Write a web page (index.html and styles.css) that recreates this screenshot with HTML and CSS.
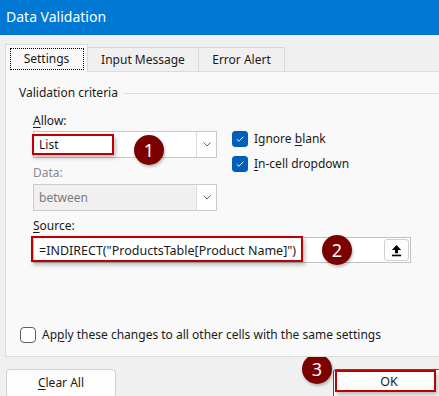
FILE: index.html
```html
<!DOCTYPE html>
<html lang="en">
<head>
  <meta charset="UTF-8" />
  <title>Data Validation</title>
  <link rel="stylesheet" href="styles.css">
</head>
<body>
  <div class="dialog">
    <div class="titlebar">Data Validation</div>

    <div class="tabs">
      <div class="tab active"><span class="focus">Settings</span></div>
      <div class="tab">Input Message</div>
      <div class="tab">Error Alert</div>
    </div>

    <div class="panel">
      <div class="group-head">
        <span>Validation criteria</span>
        <span class="rule"></span>
      </div>

      <div class="criteria">
        <div class="top-row">
          <div class="col">
            <div class="label"><u>A</u>llow:</div>
            <div class="select">
              <span class="value">List</span>
              <span class="drop">
                <svg viewBox="0 0 8 5"><path d="M0.5 0.5 L4 4 L7.5 0.5" /></svg>
              </span>
              <span class="mark mark-list"></span>
              <span class="badge badge-1">1</span>
            </div>

            <div class="label label-data disabled">Data:</div>
            <div class="select disabled">
              <span class="value">between</span>
              <span class="drop">
                <svg viewBox="0 0 8 5"><path d="M0.5 0.5 L4 4 L7.5 0.5" /></svg>
              </span>
            </div>
          </div>

          <div class="checks">
            <div class="check">
              <span class="box on">
                <svg viewBox="0 0 16 16"><path d="M4.2 8.2 L6.8 10.6 L11.8 5.4" /></svg>
              </span>
              <span>Ignore <u>b</u>lank</span>
            </div>
            <div class="check">
              <span class="box on">
                <svg viewBox="0 0 16 16"><path d="M4.2 8.2 L6.8 10.6 L11.8 5.4" /></svg>
              </span>
              <span><u>I</u>n-cell dropdown</span>
            </div>
          </div>
        </div>

        <div class="label label-source"><u>S</u>ource:</div>
        <div class="source">
          <span class="value">=INDIRECT("ProductsTable[Product Name]")</span>
          <span class="upload">
            <svg viewBox="0 0 12 14"><path d="M6 1 L11 6.5 L7.6 6.5 L7.6 10 L4.4 10 L4.4 6.5 L1 6.5 Z" /><rect x="1" y="11.5" width="10" height="1.8" /></svg>
          </span>
          <span class="mark mark-source"></span>
          <span class="badge badge-2">2</span>
        </div>
      </div>

      <div class="apply">
        <span class="box"></span>
        <span>Ap<u>p</u>ly these changes to all other cells with the same settings</span>
      </div>
    </div>

    <div class="buttons">
      <div class="btn"><u>C</u>lear All</div>
      <div class="btn btn-ok">
        OK
        <span class="mark mark-ok"></span>
        <span class="badge badge-3">3</span>
      </div>
    </div>
  </div>
</body>
</html>
```

FILE: styles.css
```css
html, body {
  margin: 0; padding: 0; height: 100%; overflow: hidden; background-color: #f0f0f0;
  font-family: 'Noto Sans', 'Open Sans', sans-serif;
  font-size: 12px;
  color: #1a1a1a;
}
u {
  text-decoration-thickness: 1px;
  text-underline-offset: 2px;
}
.dialog {
  width: 439px;
  height: 396px;
  overflow: hidden;
  background: #f0f0f0;
}
.titlebar {
  height: 35px;
  background-color: #0078d4;
  color: white;
  font-size: 14px;
  line-height: 34px;
  padding-left: 6px;
  box-sizing: border-box;
}
.tabs {
  display: flex;
  align-items: flex-end;
  margin-top: 9px;
  padding-left: 5px;
  height: 27px;
}
.tab {
  height: 24px;
  box-sizing: border-box;
  border: 1px solid #d9d9d9;
  border-bottom: none;
  border-left: none;
  background: #f0f0f0;
  display: flex;
  align-items: center;
  justify-content: center;
  line-height: 16px;
}
.tab:nth-child(2) { width: 111px; }
.tab:nth-child(3) { width: 86px; }
.tab.active {
  width: 83px;
  height: 28px;
  margin-bottom: -1px;
  border-left: 1px solid #d9d9d9;
  background: #f9f9f9;
  position: relative;
  z-index: 2;
}
.focus {
  display: flex;
  align-items: center;
  justify-content: center;
  width: 74px;
  height: 22px;
  box-sizing: border-box;
  border: 1px dotted #000;
  margin-top: 1px;
}
.panel {
  margin-left: 5px;
  width: 450px;
  height: 286px;
  box-sizing: border-box;
  background: #f9f9f9;
  border: 1px solid #dcdcdc;
  padding: 13px 0 0 13px;
  position: relative;
  z-index: 1;
}
.group-head {
  display: flex;
  align-items: center;
  gap: 6px;
  height: 16px;
  line-height: 16px;
}
.group-head .rule {
  flex: 1;
  height: 1px;
  background: #dcdcdc;
}
.criteria {
  padding-left: 14px;
}
.top-row {
  display: flex;
  gap: 15px;
}
.label {
  line-height: 16px;
  margin-top: 12px;
}
.label.disabled {
  color: #8a8a8a;
}
.label-data {
  margin-top: 7px;
}
.label-source {
  margin-top: 7px;
}
.select {
  position: relative;
  width: 184px;
  height: 27px;
  box-sizing: border-box;
  border: 1px solid #c8c8c8;
  background: #fff;
  margin-top: 2px;
  display: flex;
  align-items: center;
}
.select.disabled {
  background: #f0f0f0;
  color: #7a7a7a;
  border-color: #cccccc;
  margin-top: 3px;
}
.select .value {
  flex: 1;
  padding-left: 5px;
}
.drop {
  width: 20px;
  height: 100%;
  box-sizing: border-box;
  border-left: 1px solid #dcdcdc;
  background: #fff;
  display: flex;
  align-items: center;
  justify-content: center;
}
.drop svg {
  width: 8px;
  height: 5px;
  fill: none;
  stroke: #606060;
  stroke-width: 1;
}
.checks {
  display: flex;
  flex-direction: column;
  gap: 9px;
  padding-top: 30px;
}
.check, .apply {
  display: flex;
  align-items: center;
  gap: 6px;
  line-height: 16px;
}
.box {
  width: 16px;
  height: 16px;
  box-sizing: border-box;
  border-radius: 3px;
  border: 1px solid #5f5f5f;
  background: #fff;
  display: flex;
  align-items: center;
  justify-content: center;
}
.box.on {
  background: #005fb8;
  border-color: #005fb8;
}
.box svg {
  width: 16px;
  height: 16px;
  fill: none;
  stroke: #fff;
  stroke-width: 1.1;
}
.source {
  position: relative;
  width: 378px;
  height: 26px;
  box-sizing: border-box;
  border: 1px solid #c0c0c0;
  background: #fff;
  margin-top: 3px;
  display: flex;
  align-items: center;
}
.source .value {
  flex: 1;
  padding-left: 5px;
  font-size: 12.5px;
}
.upload {
  width: 25px;
  height: 22px;
  box-sizing: border-box;
  margin-right: 1px;
  border: 1px solid #cfcfcf;
  border-radius: 3px;
  background: #fdfdfd;
  display: flex;
  align-items: center;
  justify-content: center;
}
.upload svg {
  width: 11px;
  height: 13px;
  fill: #000;
}
.apply {
  margin-top: 64px;
  margin-left: 1px;
}
.apply .box {
  border-radius: 4px;
}
.mark {
  position: absolute;
  border: 2px solid #c00000;
  box-shadow: 2px 3px 4px rgba(0, 0, 0, 0.25);
  pointer-events: none;
}
.mark-list {
  left: -2px;
  top: 2px;
  width: 78px;
  height: 17px;
}
.mark-source {
  left: -3px;
  top: -2px;
  width: 268px;
  height: 22px;
}
.mark-ok {
  left: 1px;
  top: 0px;
  width: 97px;
  height: 18px;
}
.badge {
  position: absolute;
  width: 30px;
  height: 30px;
  border-radius: 50%;
  background: #7b0000;
  color: #fff;
  font-size: 18px;
  line-height: 30px;
  text-align: center;
  box-shadow: 1px 2px 3px rgba(0, 0, 0, 0.25);
}
.badge-1 { left: 100px; top: 3px; }
.badge-2 { left: 288px; top: -3px; }
.badge-3 { left: -32px; top: -16px; }
.buttons {
  display: flex;
  justify-content: space-between;
  margin-top: 12px;
  padding-left: 6px;
}
.btn {
  width: 110px;
  height: 30px;
  box-sizing: border-box;
  border: 1px solid #d0d0d0;
  border-radius: 4px;
  background: #fdfdfd;
  display: flex;
  justify-content: center;
  padding-top: 5px;
  line-height: 16px;
}
.btn-ok {
  position: relative;
  width: 112px;
  margin-right: -6px;
  border: 1px solid #0067c0;
  border-radius: 3px;
  padding-top: 4px;
  font-size: 12.5px;
}
```
